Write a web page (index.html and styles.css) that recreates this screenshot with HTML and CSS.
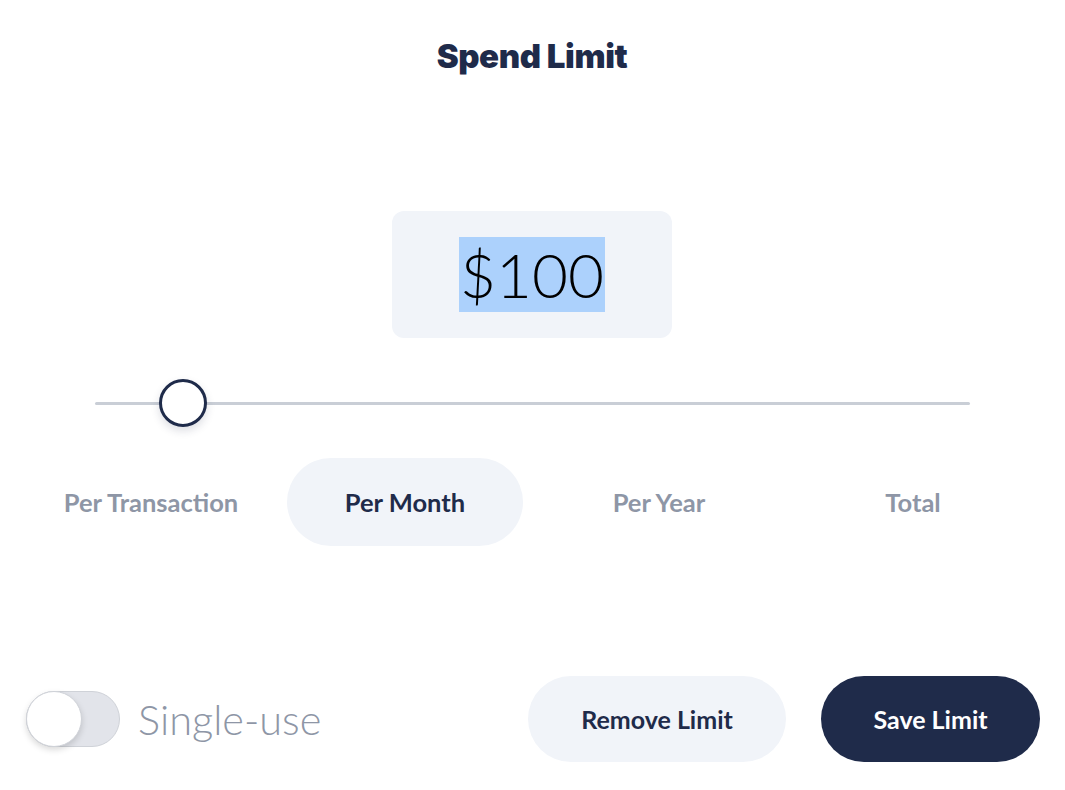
FILE: index.html
```html
<!DOCTYPE html>
<html>
<head>
<meta charset="utf-8">
<link rel="stylesheet" href="styles.css">
</head>
<body>
<div class="panel">
  <h1 class="title">Spend Limit</h1>
  <div class="amount-wrap">
    <div class="amount"><span class="sel">$100</span></div>
  </div>
  <div class="slider">
    <div class="track"></div>
    <div class="thumb"></div>
  </div>
  <div class="tabs">
    <div class="tab">Per Transaction</div>
    <div class="tab active">Per Month</div>
    <div class="tab">Per Year</div>
    <div class="tab">Total</div>
  </div>
  <div class="footer">
    <div class="single">
      <div class="toggle"><div class="knob"></div></div>
      <span class="single-label">Single-use</span>
    </div>
    <div class="actions">
      <button class="btn btn-light">Remove Limit</button>
      <button class="btn btn-dark">Save Limit</button>
    </div>
  </div>
</div>
</body>
</html>
```
FILE: styles.css
```css
* { box-sizing: border-box; }
html, body { margin: 0; padding: 0; background: #fff; }
body { font-family: Lato, "Noto Sans", sans-serif; color: #1f2b4a; }
.panel { width: 1065px; height: 790px; padding: 0 25px 0 24px; display: flex; flex-direction: column; }
.title { margin: 37px 0 0; text-align: center; font-family: Inter, sans-serif; font-weight: 900; font-size: 33px; letter-spacing: -0.4px; line-height: 38px; color: #1f2b4a; }
.amount-wrap { display: flex; justify-content: center; margin-top: 136px; }
.amount { width: 280px; height: 127px; background: #f1f4f9; border-radius: 12px; display: flex; align-items: center; justify-content: center; font-family: Lato, sans-serif; font-weight: 300; font-size: 62px; color: #000; }
.sel { background: #acd1fc; line-height: 75px; display: inline-block; padding: 0 1px; }
.slider { position: relative; margin: 41px 70px 0 71px; height: 48px; display: flex; align-items: center; }
.track { flex: 1; height: 3px; background: #c9ced6; border-radius: 2px; }
.thumb { position: absolute; left: 64px; top: 0; width: 48px; height: 48px; border-radius: 50%; background: #fff; border: 3px solid #1f2b4a; box-shadow: 0 4px 8px rgba(31,43,74,0.15); }
.tabs { display: grid; grid-template-columns: repeat(4, 1fr); margin-top: 31px; }
.tab { height: 88px; margin: 0 9px; border-radius: 44px; display: flex; align-items: center; justify-content: center; font-weight: 700; font-size: 25.5px; color: #8e96a6; }
.tab.active { background: #f1f4f9; color: #1f2b4a; }
.footer { margin-top: 130px; display: flex; justify-content: space-between; align-items: center; }
.single { display: flex; align-items: center; gap: 18px; margin-left: 2px; }
.toggle { width: 94px; height: 56px; border-radius: 28px; background: #e2e4ea; border: 1px solid #cfd2d8; position: relative; }
.knob { position: absolute; left: -1px; top: -1px; width: 56px; height: 56px; border-radius: 50%; background: #fff; border: 1px solid #cfd2d8; box-shadow: 0 3px 6px rgba(0,0,0,0.15); }
.single-label { font-weight: 300; font-size: 41.5px; color: #8e96a6; }
.actions { display: flex; gap: 35px; }
.btn { height: 86px; border: none; border-radius: 43px; font-family: Lato, sans-serif; font-weight: 700; font-size: 25px; cursor: pointer; }
.btn-light { width: 258px; background: #f1f4f9; color: #1f2b4a; }
.btn-dark { width: 219px; background: #1f2b4a; color: #fff; }
```
